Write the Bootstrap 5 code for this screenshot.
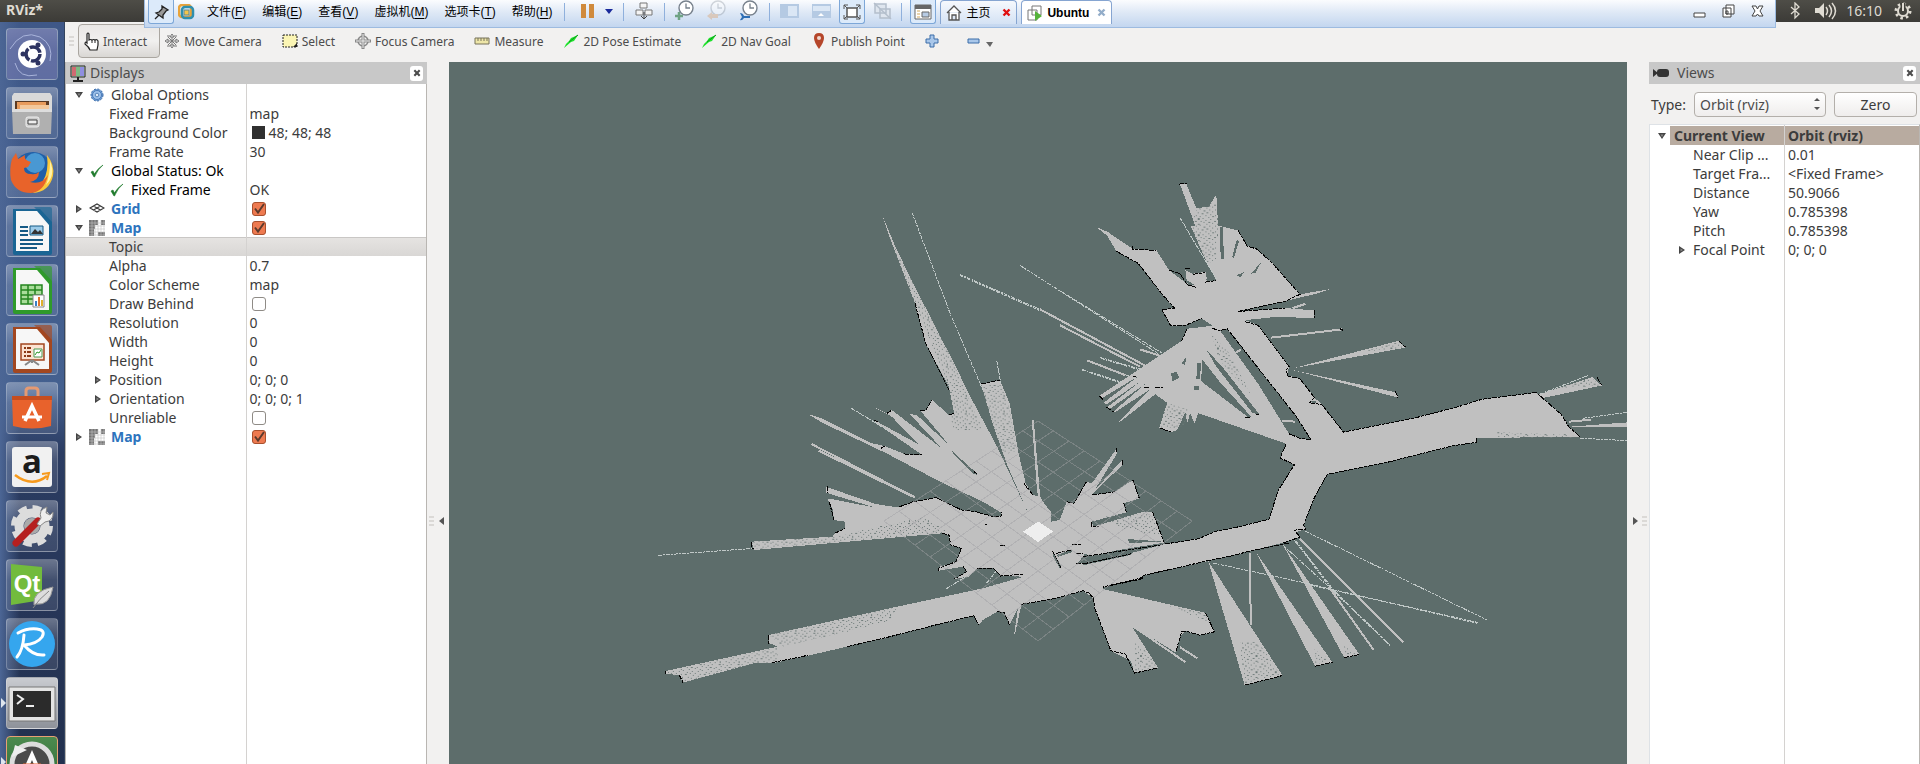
<!DOCTYPE html>
<html lang="zh-CN">
<head>
<meta charset="utf-8">
<meta name="viewport" content="width=device-width, initial-scale=1">
<title>RViz</title>
<link href="https://cdn.jsdelivr.net/npm/bootstrap@5.3.0/dist/css/bootstrap.min.css" rel="stylesheet">
<style>
  body { font-family: "Noto Sans", "Open Sans", sans-serif; font-size: 14px; line-height: 19px; color: #3c3c3c; background: #f2f1f0; }
  svg { display: block; flex: none; }
  button { font: inherit; color: inherit; background: none; border: 0; padding: 0; }
  .desktop { height: 100vh; min-height: 480px; }

  .unity-bar { height: 22px; background: linear-gradient(#4e4d47, #3c3b37); color: #dfdbd2; padding: 0 8px 0 6px; }
  .unity-bar b { font-size: 14px; line-height: 20px; }
  .clock { line-height: 20px; }

  .vm-bar { position: absolute; top: 0; left: 144px; right: 144px; height: 28px; z-index: 5; color: #000;
    font: 12px/24px "Liberation Sans", "Noto Sans CJK SC", sans-serif;
    background: linear-gradient(#fbfcfe, #dfe9f6 45%, #c3d6ef); border: solid #9dbbe0; border-width: 0 1px 1px; padding: 0 7px 0 3px; }
  .vm-menu { padding: 0 8px; height: 24px; white-space: nowrap; }
  .vm-menu u { text-underline-offset: 2px; }
  .vm-sep { width: 1px; height: 18px; margin: 3px 10px 0; background: #8fb0dc; }
  .vm-on { border: 1px solid #7da7d8; border-top: 0; border-radius: 0 0 3px 3px; background: #dceafa; height: 24px; padding: 0 3px; }
  .vm-tab { height: 24px; border: 1px solid #86a5d1; border-bottom: 0; border-radius: 4px 4px 0 0; background: linear-gradient(#f6f9fd, #d4e2f4); padding: 0 5px; }
  .vm-tab.active { background: #fff; font-weight: bold; }

  .launcher { width: 65px; padding: 6px 6px 0; gap: 7px; overflow: hidden; border-right: 1px solid #33445f;
    background: linear-gradient(90deg, #4c6695, transparent 20px), linear-gradient(#3f5888, #44608f 50%, #2b3c62 58%, #22304e); }
  .tile { width: 52px; height: 52px; flex: none; border-radius: 4px; border: 1px solid #ffffff38; background: linear-gradient(#ffffff50, #ffffff20 40%, #ffffff18); display: block; position: relative; }
  .tile.lit { background: linear-gradient(#c9cbd0, #8e929a); }
  .tile.update { background: linear-gradient(#4c8a4e, #2e6a38); border-color: #e8a173; }
  .tile svg { width: 50px; height: 50px; overflow: visible; }
  .running { position: absolute; left: -6px; top: 20px; border: solid transparent; border-width: 5px 0 5px 5px; border-left-color: #dfe6ee; }

  .tools { height: 40px; padding: 2px 0 4px 3px; font-size: 12px; color: #4c4c4c; }
  .tool { height: 34px; gap: 4px; padding: 0 10px; white-space: nowrap; }
  .tool.active { border: 1px solid #aaa6a0; border-radius: 4px; background: linear-gradient(#e9e7e5, #f1f0ef 50%, #d9d7d4); padding: 0 12px 0 4px; gap: 3px; }

  .side-left { width: 362px; border-left: 1px solid #b9b6b2; }
  .side-right { width: 271px; }
  .dock-title { height: 22px; background: #c8c8c8; padding: 0 4px; color: #4c4c4c; line-height: 22px; }
  .dock-close { width: 13px; height: 15px; background: #fff; border-radius: 3px; }
  .panel-body { background: linear-gradient(#d4d2d0, #d4d2d0) 50% 0 / 1px 100% no-repeat #fff; border: solid #b9b6b2; border-width: 0 1px 0 0; flex: 1; overflow: hidden; padding-top: 1px; }
  .tree { width: 100%; table-layout: fixed; border-collapse: collapse; }
  .tree td, .tree th { height: 19px; padding: 0; line-height: 19px; white-space: nowrap; overflow: hidden; font-weight: inherit; text-align: left; }
  .tree td { padding-left: 3px; border-left: 1px solid #d4d2d0; }
  .tree .cell { height: 19px; }
  .tree .sel { background: linear-gradient(#e6e4e2, #d9d7d5); box-shadow: inset 0 1px #c9c7c5; }
  .tree .disp { color: #2d74bd; font-weight: bold; }
  .tree .status { color: #000; }
  .tree .lvl1 { padding-left: 9px; gap: 6px; }
  .tree .lvl2 { padding-left: 43px; }
  .tree .lvl2x { padding-left: 28px; gap: 7px; }
  .tree .lvl2s { padding-left: 43px; gap: 6px; }
  .tree .v1 { padding-left: 8px; gap: 4px; }
  .tree .v2 { padding-left: 43px; }
  .view-head { background: #b8aba0; font-weight: bold; }
  .tick { appearance: none; width: 14px; height: 14px; border: 1px solid #8f8b86; border-radius: 3px; background: #fff; margin: 0 0 0 2px; display: block; }
  .tick:checked { border-color: #a8502e; background: #ee7a50 url("data:image/svg+xml,%3Csvg xmlns='http://www.w3.org/2000/svg' viewBox='0 0 12 12'%3E%3Cpath d='M2 5.500l3 4L11 1' fill='none' stroke='%235c3a2c' stroke-width='2'/%3E%3C/svg%3E"); }
  .swatch { width: 13px; height: 13px; background: #303030; margin: 0 4px 0 2px; }
  .type-row { height: 40px; padding: 0 3px 0 2px; }
  .view-type { appearance: none; height: 25px; width: 132px; border: 1px solid #b3afaa; border-radius: 4px; background: linear-gradient(#fff, #efedec); padding: 0 5px; color: #4c4c4c; font: inherit; }
  .zero { height: 25px; width: 83px; border: 1px solid #b3afaa; border-radius: 4px; background: linear-gradient(#fff, #efedec); }
  .splitter { width: 22px; padding-top: 453px; }
  .canvas3d { background: #5d6d6b; min-width: 0; overflow: hidden; }
  .canvas3d svg { width: 100%; height: 100%; }
  .free { fill: #c0c0c0; } .hole { fill: #5d6d6b; } .spray { fill: url(#speckle); }
  .ray path, .wall path, .rayd path { fill: none; vector-effect: non-scaling-stroke; }
  .ray path { stroke: #c0c0c0; stroke-width: 2; } .rayd path { stroke: #c0c8c7; stroke-width: 1; stroke-dasharray: 4 1 2 1; }
  .wall path { stroke: #000; stroke-width: 1; stroke-dasharray: 5 1 3 1; }
</style>
</head>
<body class="overflow-hidden">
<svg width="0" height="0" class="position-absolute" aria-hidden="true">
  <symbol id="open" viewBox="0 0 8 8"><path d="M0 1h8L4 7z" fill="#444"/><path d="M2.500 2.500h3L4 5z" fill="#888"/></symbol>
  <symbol id="shut" viewBox="0 0 8 8"><path d="M1 0v8l6-4z" fill="#444"/><path d="M2.500 2.500v3L5 4z" fill="#888"/></symbol>
  <symbol id="gear" viewBox="0 0 14 14"><circle cx="7" cy="7" r="6" fill="#6f9fd6" stroke="#3465a4" stroke-dasharray="2 1.500"/><circle cx="7" cy="7" r="4.500" fill="#9cc0ea" stroke="#4a7ab8"/><circle cx="7" cy="7" r="1.800" fill="#dce9f8" stroke="#3465a4" stroke-width=".7"/></symbol>
  <symbol id="ok" viewBox="0 0 14 14"><path d="M1 8l3 5q1 0 1-1 3-7 8-11Q7 5 4.500 10L3 7z" fill="#1f7a2c" stroke="#1f7a2c" stroke-width=".6"/></symbol>
  <symbol id="gridi" viewBox="0 0 16 12"><path d="M1 5l7-4 7 4-7 4zM4.500 3l7 4M11.500 3l-7 4" fill="none" stroke="#3a3a3a" stroke-width="1.200"/></symbol>
  <symbol id="mapi" viewBox="0 0 16 16"><path d="M0 0h9v5H6v4H5v7H0zM12 0h4v5h-4zM9 12h7v4H9z" fill="#757575"/><path d="M3 0v16M6 0v16M9 0v16M12 0v16M15 0v16M0 3h16M0 6h16M0 9h16M0 12h16M0 15h16" stroke="#c4c4c4" stroke-width=".6"/></symbol>
  <symbol id="arrow" viewBox="0 0 16 16"><path d="M15 2L11 8 8 9 1 15q2-5 5-7L8 5z" fill="#1fe32c"/><path d="M15 2L6 9" stroke="#0c9c1a"/></symbol>
  <symbol id="x" viewBox="0 0 9 9"><path d="M1.500 1.500l6 6M7.500 1.500l-6 6" stroke="currentColor" stroke-width="2.400"/></symbol>
  <symbol id="clk" viewBox="0 0 20 20"><circle cx="11" cy="8" r="7" fill="#fff" stroke="#77818c" stroke-width="1.400"/><path d="M11 3.500V8h4" fill="none" stroke="#77818c" stroke-width="1.300"/></symbol>
  <symbol id="doc" viewBox="0 0 50 50"><path d="M6 3h27l12 13v31q0 2-2 2H8q-2 0-2-2z" fill="currentColor"/><path d="M9 5h21l12 14v26H9z" fill="#f7f7f7"/><path d="M27 1h16q2 0 2 2v16z" fill="currentColor" opacity=".65"/></symbol>
</svg>

<div class="desktop d-flex flex-column position-relative">
  <header class="unity-bar d-flex justify-content-between flex-shrink-0">
    <b>RViz*</b>
    <div class="d-flex align-items-center gap-2">
      <svg width="14" height="18" viewBox="0 0 14 18"><path d="M3 5l8 7-4 4V1l4 4-8 7" fill="none" stroke="#dfdbd2" stroke-width="1.300"/></svg>
      <svg class="ms-1" width="24" height="18" viewBox="0 0 24 18"><path d="M1 6h4l5-5v15l-5-5H1z" fill="#dfdbd2"/><path d="M12 5q3 4 0 8M15 3q5 6 0 12M18 1q7 8 0 16" fill="none" stroke="#dfdbd2" stroke-width="1.500"/></svg>
      <span class="clock">16:10</span>
      <svg class="ms-1" width="18" height="18" viewBox="0 0 18 18"><circle cx="9" cy="9" r="7" fill="none" stroke="#dfdbd2" stroke-width="3" stroke-dasharray="2.500 3"/><circle cx="9" cy="9" r="5" fill="none" stroke="#dfdbd2" stroke-width="2"/><path d="M9 1v8" stroke="#3f3e39" stroke-width="5"/><path d="M9 1v8" stroke="#dfdbd2" stroke-width="2"/></svg>
    </div>
  </header>

  <nav class="vm-bar d-flex align-items-start" aria-label="VMware">
    <button class="vm-on" aria-label="Pin"><svg width="18" height="22" viewBox="0 0 18 22"><path d="M10 5l6 4-2 1-3 4v3l-7-5 3-1 3-3zM7 14l-4 4" fill="#999" stroke="#222" stroke-width="1.300"/></svg></button>
    <svg class="mx-1 mt-1" width="17" height="16" viewBox="0 0 17 16"><rect x="1" y="1" width="12" height="12" rx="3" fill="none" stroke="#e8a33a" stroke-width="2.500"/><rect x="4" y="3" width="11" height="11" rx="3" fill="none" stroke="#2f8fae" stroke-width="2.500"/><rect x="6" y="6" width="5" height="5" fill="#f4c54a" stroke="#5a8a96"/></svg>
    <div class="d-flex">
      <button class="vm-menu">文件(<u>F</u>)</button><button class="vm-menu">编辑(<u>E</u>)</button><button class="vm-menu">查看(<u>V</u>)</button><button class="vm-menu">虚拟机(<u>M</u>)</button><button class="vm-menu">选项卡(<u>T</u>)</button><button class="vm-menu">帮助(<u>H</u>)</button>
    </div>
    <i class="vm-sep ms-1 me-3"></i>
    <button aria-label="Pause"><svg width="32" height="22" viewBox="0 0 32 22"><path d="M0 4h5v14H0zM8 4h5v14H8z" fill="#d08a3c"/><path d="M24 9h8l-4 5z" fill="#1a2a9c"/></svg></button>
    <i class="vm-sep"></i>
    <button aria-label="Send keys"><svg width="20" height="22" viewBox="0 0 20 22"><path d="M6 3h7v5H6zM2 10h7v5H2zM11 10h7v5h-7z" fill="#f4f4f4" stroke="#777"/><path d="M10 12v7M7 16l3 3 3-3" fill="none" stroke="#444"/></svg></button>
    <i class="vm-sep"></i>
    <button aria-label="Take snapshot"><svg width="20" height="22" viewBox="0 0 20 22"><use href="#clk" width="20" height="20"/><path d="M4 12v8M0 16h8" stroke="#6fa384" stroke-width="2.500"/></svg></button>
    <button class="ms-2 ps-1 opacity-50" aria-label="Revert"><svg width="20" height="22" viewBox="0 0 20 22"><use href="#clk" width="20" height="20" opacity=".6"/><path d="M0 16l5-4v2h6v4H5v2z" fill="#d9ae86"/></svg></button>
    <button class="ms-2 ps-1" aria-label="Manage snapshots"><svg width="20" height="22" viewBox="0 0 20 22"><use href="#clk" width="20" height="20"/><path d="M1 13q3 0 4 3h6v2H5q-2 3-4 2l2-3z" fill="#2e6fb5"/></svg></button>
    <i class="vm-sep"></i>
    <button aria-label="Show library"><svg width="20" height="22" viewBox="0 0 20 22"><path d="M0 4h19v14H0z" fill="#b5cae3"/><path d="M8 6h9v10H8z" fill="#dbe7f5"/></svg></button>
    <button class="ms-2 ps-1" aria-label="Thumbnails"><svg width="19" height="22" viewBox="0 0 19 22"><path d="M0 4h19v14H0z" fill="#b5cae3"/><path d="M1 6h17v5H1z" fill="#dbe7f5"/><path d="M6 16l3-3 3 3z" fill="#fff"/></svg></button>
    <button class="vm-on ms-2" aria-label="Full screen"><svg width="18" height="22" viewBox="0 0 18 22"><path d="M4 7h10v9H4z" fill="#fff" stroke="#555" stroke-width="1.500"/><path d="M1 8V4h4M13 4h4v4M17 14v4h-4M5 18H1v-4M1 4l3 3M17 4l-3 3M17 18l-3-3M1 18l3-3" fill="none" stroke="#555"/></svg></button>
    <button class="ms-2" aria-label="Unity"><svg width="20" height="22" viewBox="0 0 20 22"><path d="M2 4h11v9H2zM7 9h10v9H7z" fill="#dfe6ef" stroke="#b4bfcc" stroke-width="1.500"/><path d="M1 3l17 16" stroke="#b4bfcc" stroke-width="1.500"/></svg></button>
    <i class="vm-sep mx-2"></i>
    <button class="vm-on me-1" aria-label="Console view"><svg width="18" height="22" viewBox="0 0 18 22"><path d="M1 4h16v14H1z" fill="#fff" stroke="#666"/><path d="M1 4h16v4H1z" fill="#666"/><path d="M3 10h3M3 13h3M3 16h3" stroke="#d3a95d"/><path d="M8 11h7v5H8z" fill="#b7cbe4" stroke="#666"/></svg></button>
    <a href="#" class="vm-tab d-flex align-items-center text-reset text-decoration-none"><svg width="16" height="18" viewBox="0 0 16 18"><path d="M1 9l7-7 7 7M3 8v8h10V8M6 16v-5h4v5" fill="#fff" stroke="#555" stroke-width="1.300"/></svg><span class="mx-1">主页</span><svg class="ms-2" width="9" height="9" color="#e01010"><use href="#x"/></svg></a>
    <a href="#" class="vm-tab active d-flex align-items-center text-reset text-decoration-none ms-1"><svg width="16" height="18" viewBox="0 0 16 18"><path d="M5 2h9v9H5zM1 6h9v10H1z" fill="#fff" stroke="#777"/><path d="M8 7l7 5-7 5z" fill="#55b33b"/></svg><span class="mx-1">Ubuntu</span><svg class="ms-1" width="9" height="9" color="#93adc9"><use href="#x"/></svg></a>
    <div class="ms-auto d-flex gap-3 pt-1 pe-1">
      <button aria-label="Minimize"><svg width="13" height="15" viewBox="0 0 13 15"><path d="M1 9h11v4H1z" fill="#fff" stroke="#444"/></svg></button>
      <button aria-label="Restore"><svg width="13" height="15" viewBox="0 0 13 15"><path d="M4 1h8v9H4zM1 4h8v9H1z" fill="#fff" stroke="#444"/><path d="M4 7h2v3H4z" fill="none" stroke="#444"/></svg></button>
      <button aria-label="Close"><svg width="13" height="15" viewBox="0 0 13 15"><path d="M1 2h4l1.500 3L8 2h4L9 7l3 5H8L6.500 10 5 12H1l3-5z" fill="#fff" stroke="#444"/></svg></button>
    </div>
  </nav>

  <div class="d-flex flex-grow-1 overflow-hidden">
    <nav class="launcher d-flex flex-column flex-shrink-0" aria-label="Launcher">
      <a href="#" class="tile" aria-label="Dash"><svg viewBox="0 0 50 50"><rect width="50" height="50" rx="3" fill="#6b72ab" opacity=".6"/><path d="M3 20Q15 0 33 8q14 8 10 24M8 34Q12 50 30 46" fill="none" stroke="#a9b4db"/><circle cx="25" cy="25" r="14" fill="#fff"/><circle cx="26" cy="25" r="7" fill="none" stroke="#2d3361" stroke-width="3.500" stroke-dasharray="13 1.700"/><circle cx="16" cy="25" r="2.500" fill="#2d3361"/><circle cx="31" cy="16" r="2.500" fill="#2d3361"/><circle cx="31" cy="34" r="2.500" fill="#2d3361"/></svg></a>
      <a href="#" class="tile" aria-label="Files"><svg viewBox="0 0 50 50"><path d="M7 5h36l2 3v13H5V8z" fill="#d9d9d9"/><path d="M8 13h34v9H8z" fill="#5a3a24"/><path d="M10 14h29v8H10z" fill="#e89b5c"/><path d="M13 17h29v5H13z" fill="#f3c79a"/><path d="M5 21h40l-1 25H6z" fill="#b0b0b0"/><path d="M5 21h40v3H5z" fill="#ddd"/><rect x="19" y="29" width="13" height="10" rx="2" fill="#ccc" stroke="#eee"/><path d="M21 32h9v4h-9z" fill="#eee" stroke="#444"/></svg></a>
      <a href="#" class="tile" aria-label="Firefox"><svg viewBox="0 0 50 50"><circle cx="26" cy="25" r="20" fill="#1f5fa8"/><circle cx="28" cy="16" r="10" fill="#5bb0e6" opacity=".7"/><path d="M40 8q8 10 6 21-4 16-20 17l10-12q6-10 4-26z" fill="#f9c83a"/><path d="M5 12l4-6 2 6 7-4q-2 5 6 7l-3 5-4 1q0 6 7 6 5 1 8-2 0 8-9 10 12 3 18-7-4 17-17 18Q9 46 4 33 2 22 5 12z" fill="#e8632a"/><path d="M43 14q6 14-4 24 4-10 4-24z" fill="#fff2a8"/></svg></a>
      <a href="#" class="tile" aria-label="Writer"><svg viewBox="0 0 50 50" color="#1a6594"><use href="#doc"/><path d="M13 21h8M13 25h8M13 29h8M13 34h23M13 38h23M13 42h17" stroke="#155a85" stroke-width="2"/><path d="M23 20h13v9H23z" fill="#9ccbe9" stroke="#155a85"/><path d="M24 28l4-5 3 3 2-2 3 4z" fill="#333"/></svg></a>
      <a href="#" class="tile" aria-label="Calc"><svg viewBox="0 0 50 50" color="#2f9a2b"><use href="#doc"/><path d="M14 20h21v19H14z" fill="#a9dd9a"/><path d="M14 20h21v19H14zM21 20v19M28 20v19M14 25h21M14 30h21M14 34h21" fill="none" stroke="#25851f" stroke-width="1.500"/><path d="M26 30h11v12H26z" fill="#fff" stroke="#888"/><path d="M29 41v-5" stroke="#3b7ec4" stroke-width="2"/><path d="M32 41v-9" stroke="#e0732c" stroke-width="2"/><path d="M35 41v-6" stroke="#e0b02c" stroke-width="2"/></svg></a>
      <a href="#" class="tile" aria-label="Impress"><svg viewBox="0 0 50 50" color="#a34720"><use href="#doc"/><path d="M14 20h23v16H14z" fill="#fbe3d2" stroke="#a34720" stroke-width="1.500"/><path d="M17 24h7M17 28h7M17 32h7" stroke="#8c3a17" stroke-width="2" stroke-dasharray="2 1 6"/><path d="M27 25h8v8h-8z" fill="#fff" stroke="#4a9a54"/><path d="M28 31l2-3 2 1 2-3" fill="none" stroke="#2f9a2b"/><path d="M25 36l-7 5M25 36l7 5M25 36v3" stroke="#888" stroke-width="2"/></svg></a>
      <a href="#" class="tile" aria-label="Software"><svg viewBox="0 0 50 50"><path d="M5 13h40l-1 30q-19 5-38 0z" fill="#e8622c"/><path d="M5 13h40v4H5z" fill="#c64d1f"/><path d="M19 13V8q0-3 3-3h6q3 0 3 3v5" fill="none" stroke="#e59a73" stroke-width="3"/><path d="M18 38l7-15 7 15" fill="none" stroke="#fff" stroke-width="3.500"/><path d="M15 34h20" stroke="#fff" stroke-width="3"/></svg></a>
      <a href="#" class="tile" aria-label="Amazon"><svg viewBox="0 0 50 50"><rect x="5" y="5" width="40" height="40" rx="3" fill="#f1f1f1"/><text x="25" y="31" text-anchor="middle" font-family="Open Sans" font-weight="bold" font-size="33" fill="#1c1c1c">a</text><path d="M8 33q17 13 32 1" fill="none" stroke="#f79a1c" stroke-width="2.500"/><path d="M35 32l7-1-2 7" fill="none" stroke="#f79a1c" stroke-width="2"/></svg></a>
      <a href="#" class="tile" aria-label="Settings"><svg viewBox="0 0 50 50"><circle cx="25" cy="25" r="17" fill="none" stroke="#dcdcdc" stroke-width="8" stroke-dasharray="8 5.350"/><circle cx="25" cy="25" r="13" fill="none" stroke="#dcdcdc" stroke-width="9"/><circle cx="25" cy="25" r="8" fill="#aaa"/><path d="M9 42L31 20" stroke="#b51f1f" stroke-width="7" stroke-linecap="round"/><path d="M30 23l4-6q-3-8 6-11l-1 6 4 2 3-3q1 9-8 10l-5 4z" fill="#eee" stroke="#888"/></svg></a>
      <a href="#" class="tile" aria-label="Qt"><svg viewBox="0 0 50 50"><path d="M4 4l31 3v33L4 45z" fill="#72bb3d"/><text x="20" y="32" text-anchor="middle" font-family="Liberation Sans" font-weight="bold" font-size="24" fill="#fff">Qt</text><path d="M27 45q-2-14 19-18-3 19-17 17z" fill="#ddd" stroke="#999"/><path d="M26 48q6-9 16-17" fill="none" stroke="#888"/></svg></a>
      <a href="#" class="tile" aria-label="RoboWare"><svg viewBox="0 0 50 50"><circle cx="25" cy="25" r="23" fill="#35a6ee"/><path d="M17 16q-1 15-7 22M11 14q9-5 19-4 9 1 5 8-5 7-18 8 9 11 20 10" fill="none" stroke="#fff" stroke-width="3" stroke-linecap="round"/></svg></a>
      <a href="#" class="tile lit" aria-label="Terminal"><i class="running"></i><svg viewBox="0 0 50 50"><path d="M2 9h46v34H2z" fill="#e4e4e4" stroke="#777"/><path d="M6 13h38v26H6z" fill="#2b2b2b"/><path d="M10 17l6 4-6 5" fill="none" stroke="#eee" stroke-width="2"/><path d="M19 28h8" stroke="#eee" stroke-width="2"/></svg></a>
      <a href="#" class="tile update" aria-label="Software Updater"><i class="running"></i><svg viewBox="0 0 50 50"><circle cx="25" cy="27" r="20" fill="#4a4a4a" stroke="#ddd" stroke-width="5"/><path d="M5 20L8 8l12 5z" fill="#eee"/><path d="M18 34l7-16 7 16" fill="none" stroke="#fff" stroke-width="4"/><path d="M16 28h18" stroke="#e8622c" stroke-width="3"/></svg></a>
    </nav>

    <div class="d-flex flex-column flex-grow-1 overflow-hidden">
      <div class="tools d-flex align-items-center flex-shrink-0" role="toolbar">
        <svg class="me-1" width="6" height="12" viewBox="0 0 6 12"><path d="M1 2h5M1 6h5M1 10h5" stroke="#c4c1bd"/></svg>
        <button class="tool active d-flex align-items-center"><svg width="17" height="20" viewBox="0 0 17 20"><path d="M4 12V3q1-2 2 0v6q2-1 3 0 2-1 3 0 2-1 3 1v4l-1 5H7q-1-3-5-6 0-3 2-1z" fill="#fff" stroke="#222" stroke-width="1.200"/><path d="M9 9v3M12 9v3" stroke="#222"/></svg>Interact</button>
        <button class="tool d-flex align-items-center ps-1"><svg width="16" height="16" viewBox="0 0 16 16"><path d="M8 1l2 3H6zM8 15l2-3H6zM1 8l3-2v4zM15 8l-3-2v4zM3 3h3M13 3h-3M3 13h3M13 13h-3M8 4v8M4 8h8M4 4l8 8M12 4l-8 8" fill="#eee" stroke="#777"/></svg>Move Camera</button>
        <button class="tool d-flex align-items-center"><svg width="16" height="16" viewBox="0 0 16 16"><path d="M1 2h14v12H1z" fill="#fbf5b4" stroke="#222" stroke-dasharray="2 1"/><path d="M15 10v4h-4z" fill="#222"/></svg>Select</button>
        <button class="tool d-flex align-items-center"><svg width="16" height="16" viewBox="0 0 16 16"><circle cx="8" cy="8" r="5" fill="none" stroke="#888" stroke-width="1.500"/><path d="M8 0v16M0 8h16" stroke="#888" stroke-width="3"/><path d="M8 1v14M1 8h14" stroke="#eee"/></svg>Focus Camera</button>
        <button class="tool d-flex align-items-center"><svg width="16" height="16" viewBox="0 0 16 16"><path d="M1 5h14v6H1z" fill="#eee6a8" stroke="#77735a"/><path d="M4 5v3M7 5v3M10 5v3M13 5v3" stroke="#77735a"/></svg>Measure</button>
        <button class="tool d-flex align-items-center"><svg width="16" height="16"><use href="#arrow"/></svg>2D Pose Estimate</button>
        <button class="tool d-flex align-items-center"><svg width="16" height="16"><use href="#arrow"/></svg>2D Nav Goal</button>
        <button class="tool d-flex align-items-center"><svg width="16" height="16" viewBox="0 0 16 16"><path d="M8 16Q3 9 3 5q0-5 5-5t5 5q0 4-5 11z" fill="#b5462a"/><circle cx="8" cy="5" r="2" fill="#f0d8cf"/></svg>Publish Point</button>
        <button class="tool me-2" aria-label="Add tool"><svg width="14" height="14" viewBox="0 0 14 14"><path d="M5 1h4v4h4v4H9v4H5V9H1V5h4z" fill="#a9c7ea" stroke="#3a6ca8"/></svg></button>
        <button class="tool" aria-label="Remove tool"><svg width="26" height="14" viewBox="0 0 26 14"><path d="M1 5h11v4H1z" fill="#a9c7ea" stroke="#3a6ca8"/><path d="M19 8h7l-3 5z" fill="#666"/></svg></button>
      </div>

      <div class="d-flex flex-grow-1 overflow-hidden">
        <section class="side-left d-flex flex-column flex-shrink-0" aria-label="Displays">
          <div class="dock-title d-flex align-items-center">
            <svg class="me-1" width="16" height="17" viewBox="0 0 16 17"><path d="M1 1h14v11H1z" fill="#b8d8b8" stroke="#222"/><path d="M2 2h4v9H2z" fill="#d06a72"/><path d="M6 2h4v9H6z" fill="#7dbb84"/><path d="M10 2h4v9h-4z" fill="#8f8fe0"/><path d="M8 12v3M3 16h10" stroke="#222" stroke-width="2"/></svg>Displays
            <button class="dock-close ms-auto d-flex align-items-center justify-content-center" aria-label="Close Displays"><svg width="8" height="8"><use href="#x"/></svg></button>
          </div>
          <div class="panel-body">
            <table class="tree">
              <colgroup><col style="width:50%"><col style="width:50%"></colgroup>
              <tbody>
              <tr><th><div class="cell lvl1 d-flex align-items-center"><svg width="8" height="8"><use href="#open"/></svg><svg width="16" height="14"><use href="#gear"/></svg>Global Options</div></th><td></td></tr>
              <tr><th class="lvl2">Fixed Frame</th><td>map</td></tr>
              <tr><th class="lvl2">Background Color</th><td><div class="cell d-flex align-items-center"><i class="swatch"></i>48; 48; 48</div></td></tr>
              <tr><th class="lvl2">Frame Rate</th><td>30</td></tr>
              <tr class="status"><th><div class="cell lvl1 d-flex align-items-center"><svg width="8" height="8"><use href="#open"/></svg><svg width="16" height="14"><use href="#ok"/></svg>Global Status: Ok</div></th><td></td></tr>
              <tr><th class="status"><div class="cell lvl2s d-flex align-items-center"><svg width="16" height="14"><use href="#ok"/></svg>Fixed Frame</div></th><td>OK</td></tr>
              <tr><th class="disp"><div class="cell lvl1 d-flex align-items-center"><svg width="8" height="8"><use href="#shut"/></svg><svg width="16" height="12"><use href="#gridi"/></svg><label for="c1">Grid</label></div></th><td><input class="tick" type="checkbox" id="c1" checked></td></tr>
              <tr><th class="disp"><div class="cell lvl1 d-flex align-items-center"><svg width="8" height="8"><use href="#open"/></svg><svg width="16" height="16"><use href="#mapi"/></svg><label for="c2">Map</label></div></th><td><input class="tick" type="checkbox" id="c2" checked></td></tr>
              <tr class="sel"><th class="lvl2">Topic</th><td></td></tr>
              <tr><th class="lvl2">Alpha</th><td>0.7</td></tr>
              <tr><th class="lvl2">Color Scheme</th><td>map</td></tr>
              <tr><th class="lvl2"><label for="c3">Draw Behind</label></th><td><input class="tick" type="checkbox" id="c3"></td></tr>
              <tr><th class="lvl2">Resolution</th><td>0</td></tr>
              <tr><th class="lvl2">Width</th><td>0</td></tr>
              <tr><th class="lvl2">Height</th><td>0</td></tr>
              <tr><th><div class="cell lvl2x d-flex align-items-center"><svg width="8" height="8"><use href="#shut"/></svg>Position</div></th><td>0; 0; 0</td></tr>
              <tr><th><div class="cell lvl2x d-flex align-items-center"><svg width="8" height="8"><use href="#shut"/></svg>Orientation</div></th><td>0; 0; 0; 1</td></tr>
              <tr><th class="lvl2"><label for="c4">Unreliable</label></th><td><input class="tick" type="checkbox" id="c4"></td></tr>
              <tr><th class="disp"><div class="cell lvl1 d-flex align-items-center"><svg width="8" height="8"><use href="#shut"/></svg><svg width="16" height="16"><use href="#mapi"/></svg><label for="c5">Map</label></div></th><td><input class="tick" type="checkbox" id="c5" checked></td></tr>
              </tbody>
            </table>
          </div>
        </section>

        <div class="splitter flex-shrink-0 d-flex align-items-start justify-content-center"><svg width="18" height="12" viewBox="0 0 18 12"><path d="M0 2h5M0 6h5M0 10h5" stroke="#c4c1bd"/><path d="M15 2v8l-5-4z" fill="#555"/></svg></div>

        <main class="canvas3d flex-grow-1">
          <svg viewBox="449 62 1178 702" preserveAspectRatio="xMidYMid slice" shape-rendering="crispEdges" role="img" aria-label="Occupancy map">
            <defs><pattern id="speckle" width="53" height="47" patternUnits="userSpaceOnUse"><path d="M2 3h3v3H2zM14 1h3v3h-3zM25 5h3v3h-3zM39 2h3v3h-3zM47 8h3v3h-3zM8 11h3v3H8zM19 13h6v3h-6zM33 10h3v3h-3zM42 16h3v3h-3zM3 19h3v3H3zM12 22h3v3h-3zM28 20h3v3h-3zM36 24h3v3h-3zM49 23h3v3h-3zM7 29h6v3H7zM20 28h3v3h-3zM30 32h3v3h-3zM43 30h3v3h-3zM1 37h3v3H1zM15 36h3v3h-3zM24 39h3v3h-3zM37 38h6v3h-6zM9 43h3v3H9zM31 43h3v3h-3zM48 41h3v3h-3z" fill="#6f7c7a"/></pattern></defs>
            <!-- western rooms and corridor -->
            <g transform="translate(640 200) scale(.35714 .33333)">
              <path class="free" d="M72 1413L385 1340 360 1328V1305L720 1220 960 1165 1075 1130 1230 1087 1568 1018 1600 1011V1078L1530 1095 1470 1112 1410 1125 1405 1137 1300 1162 1270 1195 1240 1172 1165 1195 1068 1213 1050 1303 1048 1300 1058 1225 1035 1275 1020 1238 1000 1235 960 1260 948 1275 935 1247 820 1277 700 1310 580 1340 470 1367 370 1390 325 1388 120 1448 110 1425 72 1422z"/>
              <path class="free" d="M312 1025L540 1010 545 1000 575 985V965L543 960 540 930 530 910 525 895 660 923 520 878V860L660 912 720 922 765 905 830 893 900 930 940 935 990 950 1012 948V938L960 905 840 845 690 760 510 668 472 643 510 655 650 730 685 738 740 762 790 765 750 735 660 668 655 660 780 733 705 650 655 622 692 640 705 630 845 745 755 642 775 645 860 730 850 715 785 632 800 630 818 600 865 645 880 640 865 560 800 430 770 310 700 115 677 42 715 140 760 240 870 470 930 600 1000 740 1085 935 1030 800 990 680 955 552 1008 540 1035 610 1060 760 1080 850 1100 885 1120 890 1135 915 1150 935V965L1175 960 1195 905 1215 910 1250 845 1265 850 1335 745V762L1272 872 1350 780V795L1265 885 1330 875 1380 840 1398 895 1355 910 1362 937 1265 965 1270 980 1410 935H1435L1468 1028 1340 1050 1250 1072 1220 1092 1270 1110 1080 1150 1060 1150 1075 1130 1010 1128 990 1105 945 1105 920 1130 880 1137 915 1115 905 1100 835 1112 840 1100 885 1085 900 1045 870 1035 865 1005 845 1000 320 1050z"/>
              <path class="spray" d="M700 115L770 310 865 560 865 645 880 690 960 690 870 470 760 240zM955 555h55l25 70 20 130-40 10zM312 1025l230-14 250-60 70 45-540 52zM360 1305l360-85-20 45-300 75zM72 1413l310-70 10 45-65 2-205 57zM1300 950l130-12 25 70-110-25z"/>
              <path class="hole" d="M855 735l85 82 4 8-14-6zM1155 1052l25 48-6 3-18-35zM1165 1065l45-15v6l-38 14zM1225 1092l20-30 45 10zM1240 1085l225-48v7l-225 52zM1365 1017l100 8-95 4z"/>
              <g class="ray"><path d="M480 732L770 892M500 752L760 888M1100 660L1115 880M1100 665L1122 945M835 1110L915 1085M1120 328L1420 500"/></g>
              <g class="rayd"><path d="M50 1066L320 1045M762 38L870 345 960 570M1065 197L1450 460M999 482L1010 550M1255 483L1400 540M1237 510L1350 550M1290 475L1400 510M895 223L1120 328M895 226L1120 332M592 625L700 695M858 1166L920 1125M970 1150L1000 1110"/></g>
              <g class="wall"><path d="M770 310L800 430 865 570M955 552L1008 540M865 645L880 640M785 632L800 630 818 600M655 660l10 6M692 640l13-10M740 762L790 765M675 745l10-7M725 921L765 905 830 893 900 930 940 935 990 950 1012 948V936M525 858v22M530 905L543 960M545 1000L575 985M312 1025v18l10 6M845 1000L865 1005 870 1035 900 1045 885 1085 835 1105V1113M905 1100L915 1115 880 1137M945 1105L990 1105 1010 1128 1075 1122M72 1413v10M110 1425l10 22M360 1305v30M370 1388l100-22M580 1340L700 1310 820 1277 935 1247 948 1275M1000 1235l20 3 15 37M1068 1213L1165 1195 1240 1172 1258 1180 1270 1195M1295 1162L1405 1137 1410 1125 1470 1112 1530 1095 1568 1085M1240 1092L1568 1018M1220 1092l20-3M1240 1070L1470 1033M1075 850l25 35M1195 905L1215 910 1250 845M1265 885L1330 875M1380 840L1398 895M1355 910L1362 937M1265 965v15h20M1435 935L1468 1028M1155 1052L1178 1103M1165 1060L1210 1050M1210 1035h25M1220 1062h20M935 815l10 8M965 975h8M1008 1038h14M1335 745v12M1350 780v15"/></g>
            </g>
            <!-- eastern junction, northern room, southern fans -->
            <g transform="translate(1060 160) scale(.36351 .34436)">
              <path class="free" d="M100 195L130 208 200 258 265 262 300 320 350 360 345 320 365 330 400 325 405 350 430 350 405 300 360 192 372 190 330 70 347 68 375 140 410 135 430 100 435 190 490 205 515 250 540 258 580 295 660 390 743 375 705 388 620 410 490 440 620 430 700 437V460L600 455 510 465 545 480 570 515 630 600 625 625 660 635 700 690 720 710 780 790 980 748 1100 715 1160 695 1310 675 1380 740 1400 775 1430 803 1145 808V820L1080 830 900 878 735 913 700 980 670 1060 675 1072 650 1080 660 1095 600 1115 525 1135 470 1150 340 1180 235 1205 118 1240 200 1140 290 1115 380 1100 430 1078 480 1068 575 1043 600 960 645 885 605 865 622 825 690 812 650 745 460 490 440 495 390 460 345 480 305 482 280 435 315 430 285 395 215 300 155 265 130 220z"/>
              <path class="free" d="M430 480L350 490 335 525 108 685 115 692 215 628 120 705 128 710 225 640 130 718 138 722 235 650 145 732H152L245 668 160 762 172 755 262 680 295 705 273 778 305 790 322 785 345 732 350 765 358 735 370 765 380 735 625 825 690 815 660 808 630 795 545 650z"/>
              <path class="hole" d="M402 550L450 605 548 738 530 735 430 600zM392 580L440 645 528 748 515 745 388 642zM305 620l15-5 8 18-18 10zM378 590h10l-3 45h-10zM335 590l13-20-4 25zM370 655h12v12h-12zM440 195h8l3 92h-9zM493 235l-15 50-4-3 12-50zM485 335l22-10-10 15zM525 330l28-32-15 30zM350 350l20 12-18 5zM398 345l25-2-12 10zM685 703l20-5v8z"/>
              <path class="spray" d="M360 195l15-50 55-30 5 80-5 90-25 20zM295 705l60 20-15 50-65 5zM415 500l50 60 60 120-90-100zM1200 790l220 8-15 10h-200z"/>
              <path class="free" d="M92 1270L115 1245 400 1315 425 1370 385 1380 345 1368 330 1385 318 1430 195 1350 270 1475 205 1490 195 1455 140 1425 95 1300zM408 1165L525 1355 612 1497 508 1525zM538 1137L750 1460 702 1470zM612 1115L825 1438 782 1445zM640 605L932 525 950 545zM640 610L925 675 930 690zM1315 682L1465 630 1490 655 1325 692zM1395 775l165-13v12z"/>
              <path class="spray" d="M205 1400l35 30 30 45-65 15zM495 1400l50 0 65 97-102 28-10-90zM700 1420l40 28-38 22zM780 1410l45 28-38 7zM850 550l85-22 12 18-100 10zM1360 665l105-32 20 22zM300 1295l100 22 10 25z"/>
              <g class="ray"><path d="M580 516L775 492M522 1140L525 1350M660 1100L945 1400M740 1240L863 1423M195 1350L345 1458M330 1415l48 32M75 582L180 625M220 550L280 570M640 430L675 418M480 562l18-12M612 757l35 3M0 480L220 600M1400 760l60-6"/></g>
              <g class="rayd"><path d="M675 1078L1175 1336M420 1170L660 1225 1150 1346M690 1235L1150 1343M330 168L430 345M1440 750L1560 733M1430 808L1560 815M0 380L280 560M60 608L170 645M110 573L230 610M1320 680L1455 625M645 1105L750 1250 908 1410M648 1105L753 1250 905 1405M615 1120L740 1240"/></g>
              <g class="wall"><path d="M155 265L215 300 285 395 315 430 280 435 305 482 345 480 390 460M200 250v10L265 262M300 320l30 10 20 32 25 8M345 315h12M365 332l35-5M398 355l32-5M328 70l20-2M490 205L515 250 540 258 580 295 660 390 620 410 490 440 620 430M700 437V460M510 470L545 480 570 515 630 600 622 610 628 628 660 635 700 690 685 705 720 710 780 790 980 748 1100 715 1160 695 1310 675 1380 740 1400 775 1430 803M1145 808V820L1080 830 900 878 735 913 700 980 670 1060 675 1072 645 1075 660 1095 615 1112M630 1112L525 1135 470 1150 400 1165 340 1180 235 1205 220 1215 118 1240M290 1115L380 1100 430 1078 480 1068 575 1043 600 960 645 885 605 865 622 825M690 812L650 745 460 490 440 495 415 488M690 812L660 808 630 795M92 1270L95 1300 140 1425 180 1435 205 1490 270 1475M400 1315L425 1370 385 1380 345 1368 335 1370 318 1430M508 1525L612 1497M702 1470L750 1458M782 1445L825 1436M932 525L952 545M922 672l8 18M1478 632l12 22M350 490L335 525M108 685l10 10M128 718l20 14M275 778l30 12M510 748h12M538 738h10M230 660h14M262 662h20M770 490l8 4M200 628h10"/></g>
            </g>
            <g id="ground" fill="none" stroke="#a0a0a4" stroke-opacity=".45"></g>
            <path d="M1023 531.500L1038 521.500 1053 531.500 1038 542z" fill="#eee"/>
          </svg>
        </main>

        <div class="splitter flex-shrink-0 d-flex align-items-start justify-content-center"><svg width="18" height="12" viewBox="0 0 18 12"><path d="M13 2h5M13 6h5M13 10h5" stroke="#c4c1bd"/><path d="M4 2v8l5-4z" fill="#555"/></svg></div>

        <section class="side-right d-flex flex-column flex-shrink-0" aria-label="Views">
          <div class="dock-title d-flex align-items-center">
            <svg class="me-1" width="16" height="10" viewBox="0 0 16 10"><path d="M0 1l5 4-5 4z" fill="#333"/><rect x="4" y="1" width="12" height="8" rx="3" fill="#333"/></svg><span class="ms-1">Views</span>
            <button class="dock-close ms-auto d-flex align-items-center justify-content-center" aria-label="Close Views"><svg width="8" height="8"><use href="#x"/></svg></button>
          </div>
          <div class="type-row d-flex align-items-center justify-content-between">
            <label for="vt">Type:</label>
            <div class="position-relative"><select id="vt" class="view-type"><option>Orbit (rviz)</option></select><svg class="position-absolute top-50 end-0 translate-middle-y me-1" width="9" height="14" viewBox="0 0 9 14"><path d="M1 4l3-3 3 3zM1 10h6l-3 3z" fill="#555"/></svg></div>
            <button class="zero">Zero</button>
          </div>
          <div class="panel-body border-start border-top">
            <table class="tree">
              <colgroup><col style="width:50%"><col style="width:50%"></colgroup>
              <tbody>
              <tr class="fw-bold"><th><div class="cell v1 d-flex align-items-center"><svg width="8" height="8"><use href="#open"/></svg><span class="view-head flex-grow-1 ps-1">Current View</span></div></th><td class="view-head">Orbit (rviz)</td></tr>
              <tr><th class="v2">Near Clip ...</th><td>0.01</td></tr>
              <tr><th class="v2">Target Fra...</th><td>&lt;Fixed Frame&gt;</td></tr>
              <tr><th class="v2">Distance</th><td>50.9066</td></tr>
              <tr><th class="v2">Yaw</th><td>0.785398</td></tr>
              <tr><th class="v2">Pitch</th><td>0.785398</td></tr>
              <tr><th><div class="cell lvl2x d-flex align-items-center"><svg width="8" height="8"><use href="#shut"/></svg>Focal Point</div></th><td>0; 0; 0</td></tr>
              </tbody>
            </table>
          </div>
        </section>
      </div>
    </div>
  </div>
</div>
<script src="https://cdn.jsdelivr.net/npm/bootstrap@5.3.0/dist/js/bootstrap.bundle.min.js"></script>
<script>
  // Ten-by-ten ground grid, seen from the orbit camera.
  const top_ = [1038, 421], right = [1192, 521], bottom = [1038, 641], left = [884, 521];
  const mix = (a, b, t) => [a[0] + (b[0] - a[0]) * t, a[1] + (b[1] - a[1]) * t].map(Math.round);
  let d = '';
  for (let i = 0; i <= 10; i++) {
    const t = i / 10;
    d += `M${mix(top_, right, t)}L${mix(left, bottom, t)}M${mix(top_, left, t)}L${mix(right, bottom, t)}`;
  }
  document.getElementById('ground').innerHTML = `<path d="${d}"/>`;
</script>
</body>
</html>
